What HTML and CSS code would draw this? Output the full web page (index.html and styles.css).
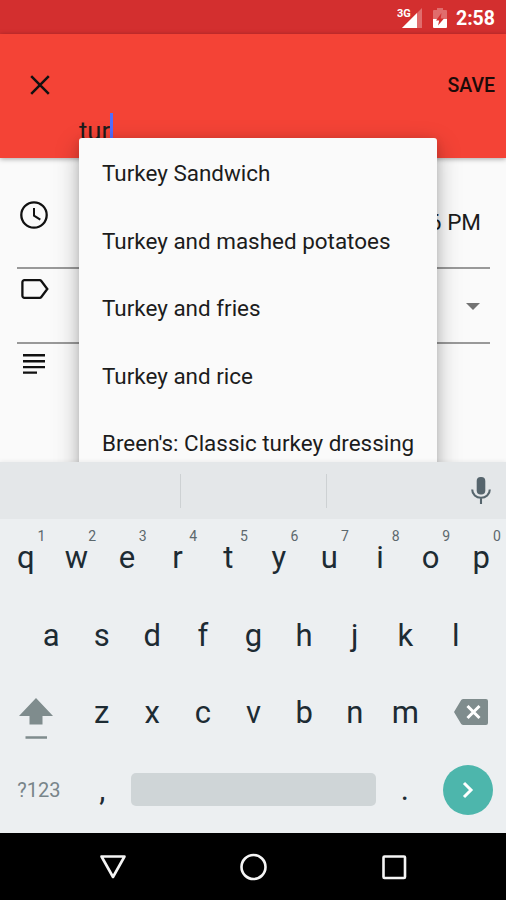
FILE: index.html
```html
<!DOCTYPE html>
<html lang="en">
<head>
    <meta charset="UTF-8">
    <meta name="viewport" content="width=device-width, initial-scale=1.0">
    <title>Add meal</title>
    <link rel="stylesheet" href="styles.css">
</head>
<body>
    <div class="phone">
        <div class="status-bar">
            <svg class="signal" width="26" height="24" viewBox="0 0 26 24">
                <path d="M25 4v20H5z" fill="#fff" fill-opacity=".3"/>
                <path d="M20 9v15H5z" fill="#fff"/>
                <text x="0" y="13" class="network">3G</text>
            </svg>
            <svg class="battery" width="14" height="20" viewBox="0 0 14 20">
                <path d="M4 0h6v2h3a1 1 0 0 1 1 1v8H0V3a1 1 0 0 1 1-1h3z" fill="#fff" fill-opacity=".3"/>
                <path d="M0 11h14v8a1 1 0 0 1-1 1H1a1 1 0 0 1-1-1z" fill="#fff"/>
                <path d="M8.500 5L3 12.500h3.200L5 17.500l6-7H7.700z" fill="#d32f2f"/>
            </svg>
            <span class="clock">2:58</span>
        </div>

        <div class="app-bar">
            <div class="app-actions">
                <svg width="20" height="20" viewBox="0 0 20 20">
                    <path d="M1.200 1.200l17.600 17.600M18.800 1.200L1.200 18.800" stroke="#111" stroke-width="2.500"/>
                </svg>
                <span class="save">SAVE</span>
            </div>
            <div class="meal-input">tur<span class="caret"></span></div>
        </div>

        <div class="form">
            <div class="field field-time">
                <svg width="28" height="28" viewBox="0 0 28 28" fill="none" stroke="#111">
                    <circle cx="14" cy="14" r="12.700" stroke-width="2.300"/>
                    <path d="M14 7v7.600l6.300 4" stroke-width="2"/>
                </svg>
                <span class="time">2:56 PM</span>
            </div>
            <div class="field field-type">
                <svg width="28" height="20" viewBox="0 0 28 20" fill="none" stroke="#111" stroke-width="2.300">
                    <path d="M3.400 1.200h15.300a2 2 0 0 1 1.600.8l6 8-6 8a2 2 0 0 1-1.600.8H3.400a2 2 0 0 1-2-2V3.200a2 2 0 0 1 2-2z"/>
                </svg>
                <svg class="arrow" width="14" height="7" viewBox="0 0 14 7"><path d="M0 0h14L7 7z" fill="#737373"/></svg>
            </div>
            <div class="field field-notes">
                <svg width="22" height="20" viewBox="0 0 22 20" stroke="#111" stroke-width="2.400">
                    <path d="M0 1.300h22M0 7.200h22M0 13.100h22M0 18.600h14"/>
                </svg>
            </div>
        </div>

        <ul class="dropdown">
            <li>Turkey Sandwich</li>
            <li>Turkey and mashed potatoes</li>
            <li>Turkey and fries</li>
            <li>Turkey and rice</li>
            <li>Breen's: Classic turkey dressing</li>
        </ul>

        <div class="keyboard">
            <div class="suggestions">
                <span></span>
                <span></span>
                <span>
                    <svg width="20" height="28" viewBox="0 0 20 28">
                        <rect x="5.700" y="0" width="8.600" height="17.500" rx="4" fill="#56656d"/>
                        <path d="M1.200 12.500c0 5 4 8.300 8.800 8.300s8.800-3.300 8.800-8.300M10 21v6" fill="none" stroke="#56656d" stroke-width="2.100"/>
                    </svg>
                </span>
            </div>
            <div class="keys">
                <div class="row">
                    <div class="key">q<sup>1</sup></div>
                    <div class="key">w<sup>2</sup></div>
                    <div class="key">e<sup>3</sup></div>
                    <div class="key">r<sup>4</sup></div>
                    <div class="key">t<sup>5</sup></div>
                    <div class="key">y<sup>6</sup></div>
                    <div class="key">u<sup>7</sup></div>
                    <div class="key">i<sup>8</sup></div>
                    <div class="key">o<sup>9</sup></div>
                    <div class="key">p<sup>0</sup></div>
                </div>
                <div class="row">
                    <div class="key">a</div>
                    <div class="key">s</div>
                    <div class="key">d</div>
                    <div class="key">f</div>
                    <div class="key">g</div>
                    <div class="key">h</div>
                    <div class="key">j</div>
                    <div class="key">k</div>
                    <div class="key">l</div>
                </div>
                <div class="row">
                    <div class="key wide shift">
                        <svg width="34" height="42" viewBox="0 0 34 42" fill="#7f8c8d">
                            <path d="M17 0l17 18H23.500v8.500h-13V18H0zM6.500 38.200h21.500v2.600H6.500z"/>
                        </svg>
                    </div>
                    <div class="key">z</div>
                    <div class="key">x</div>
                    <div class="key">c</div>
                    <div class="key">v</div>
                    <div class="key">b</div>
                    <div class="key">n</div>
                    <div class="key">m</div>
                    <div class="key wide delete">
                        <svg width="34" height="26" viewBox="0 0 34 26">
                            <path d="M9.500 0H32a2 2 0 0 1 2 2v22a2 2 0 0 1-2 2H9.500a3 3 0 0 1-2.300-1L0 13l7.200-12a3 3 0 0 1 2.300-1z" fill="#7f8c8d"/>
                            <path d="M13.500 7l12 12M25.500 7l-12 12" stroke="#fff" stroke-width="3"/>
                        </svg>
                    </div>
                </div>
                <div class="row row-bottom">
                    <div class="key wide symbols">?123</div>
                    <div class="key">,</div>
                    <div class="space"></div>
                    <div class="key">.</div>
                    <div class="key wide">
                        <div class="enter">
                            <svg width="12" height="18" viewBox="0 0 12 18"><path d="M2 2l7 7-7 7" fill="none" stroke="#fff" stroke-width="3"/></svg>
                        </div>
                    </div>
                </div>
            </div>
        </div>

        <div class="nav-bar">
            <svg width="28" height="28" viewBox="0 0 28 28"><path d="M2.500 3.500h23L14 24z"/></svg>
            <svg width="28" height="28" viewBox="0 0 28 28"><circle cx="14.500" cy="14" r="12"/></svg>
            <svg width="28" height="28" viewBox="0 0 28 28"><rect x="3.500" y="3.500" width="21.500" height="21.500" rx="1"/></svg>
        </div>
    </div>
</body>
</html>
```
FILE: styles.css
```css
* {
    margin: 0;
    padding: 0;
    box-sizing: border-box;
}

body {
    background: #000;
    font-family: Roboto, "Liberation Sans", sans-serif;
    color: #1c1c1c;
}

svg {
    display: block;
    flex-shrink: 0;
}

.phone {
    position: relative;
    display: flex;
    flex-direction: column;
    width: 506px;
    height: 900px;
    overflow: hidden;
    background: #fafafa;
}

.status-bar {
    display: flex;
    justify-content: flex-end;
    align-items: center;
    height: 34px;
    padding: 2px 11px 0 0;
    background: #d32f2f;
}

.signal {
    margin: -5px 10px 0 0;
}

.network {
    font-size: 11px;
    font-weight: 700;
    fill: #fff;
}

.battery {
    margin-right: 9px;
}

.clock {
    color: #fff;
    font-size: 19.5px;
    font-weight: 700;
}

.app-bar {
    height: 124px;
    background: #f44336;
    box-shadow: 0 1px 5px rgba(0, 0, 0, 0.35);
}

.app-actions {
    display: flex;
    justify-content: space-between;
    align-items: center;
    padding: 39px 11px 0 30px;
    height: 63px;
    color: #1c0a08;
}

.save {
    font-size: 19.5px;
    font-weight: 500;
}

.meal-input {
    display: flex;
    align-items: center;
    padding: 16px 0 0 79px;
    font-size: 25.5px;
    line-height: 37px;
}

.caret {
    width: 3px;
    height: 37px;
    background: #536dfe;
}

.form {
    flex: 1;
    padding: 0 16px 0 17px;
}

.field {
    display: flex;
    justify-content: space-between;
    border-bottom: 2px solid #999;
}

.field-time {
    height: 111px;
    padding: 43px 9px 0 3px;
}

.time {
    margin-top: 8px;
    font-size: 22.5px;
    line-height: 26px;
}

.field-type {
    height: 75px;
    padding: 10px 10px 0 4px;
}

.arrow {
    margin-top: 24px;
}

.field-notes {
    padding: 10px 0 0 6px;
    border: none;
}

/* autocomplete list, the keyboard cuts it off */
.dropdown {
    position: absolute;
    top: 138px;
    left: 79px;
    width: 358px;
    height: 360px;
    list-style: none;
    background: #fafafa;
    border-radius: 3px;
    box-shadow: 0 8px 24px rgba(0, 0, 0, 0.28), 0 2px 8px rgba(0, 0, 0, 0.12);
}

.dropdown li {
    height: 67.5px;
    padding-left: 23px;
    font-size: 22.45px;
    line-height: 70px;
    white-space: nowrap;
}

.keyboard {
    position: relative;
    height: 371px;
    background: #eceff1;
    box-shadow: 0 -1px 4px rgba(0, 0, 0, 0.06);
}

.suggestions {
    display: flex;
    align-items: center;
    height: 57px;
    padding: 0 15px 0 35px;
    background: #e4e7e9;
}

.suggestions span {
    display: flex;
    justify-content: flex-end;
    align-items: center;
    width: 146px;
    height: 34px;
    border-right: 1px solid #cdd1d3;
}

.suggestions span:last-child {
    flex: 1;
    border: none;
}

.keys {
    padding-left: 1px;
}

.row {
    display: flex;
    justify-content: center;
    align-items: center;
    height: 77.5px;
}

.row-bottom {
    height: 76px;
}

.key {
    position: relative;
    display: flex;
    flex-shrink: 0;
    justify-content: center;
    align-items: center;
    width: 50.6px;
    height: 100%;
    font-size: 31px;
    color: #1d2b33;
}

.key sup {
    position: absolute;
    top: 9px;
    left: 37px;
    font-size: 14px;
    line-height: 16px;
    color: #5c686d;
}

.wide {
    width: 75.9px;
}

.shift {
    padding: 12px 5px 0 0;
}

.delete {
    padding: 0 0 2px 4px;
}

.symbols {
    font-size: 20px;
    color: #78858a;
}

.space {
    width: 245px;
    height: 33px;
    margin: 0 4px;
    background: #cfd5d7;
    border-radius: 5px;
}

.enter {
    display: flex;
    justify-content: center;
    align-items: center;
    width: 50px;
    height: 50px;
    border-radius: 50%;
    background: #4db6ac;
}

.nav-bar {
    display: flex;
    justify-content: center;
    align-items: center;
    gap: 112.5px;
    height: 67px;
    background: #000;
}

.nav-bar svg {
    fill: none;
    stroke: #f5f5f5;
    stroke-width: 2.6;
    stroke-linejoin: round;
}
```
